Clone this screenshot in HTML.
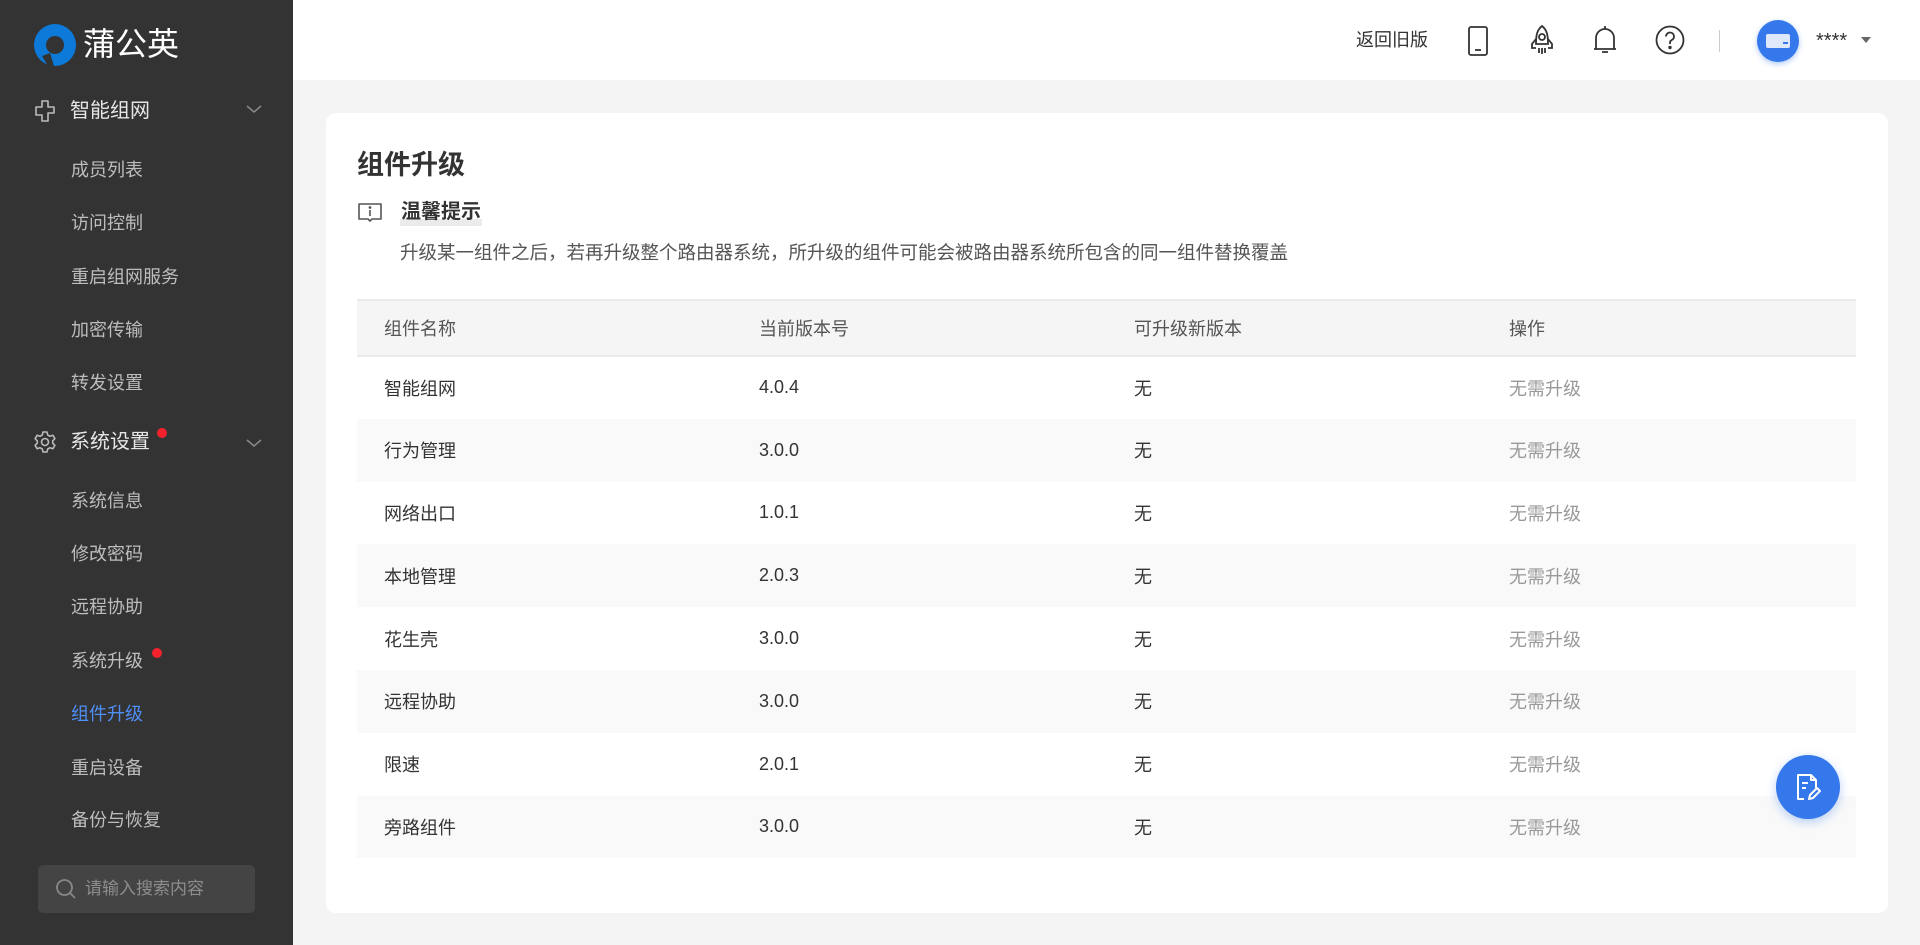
<!DOCTYPE html>
<html><head><meta charset="utf-8">
<style>
*{margin:0;padding:0;box-sizing:border-box}
body{width:1920px;height:945px;overflow:hidden;background:#f4f4f4;font-family:"Liberation Sans","Noto Sans CJK SC",sans-serif;position:relative}
.side{position:absolute;left:0;top:0;width:293px;height:945px;background:#333}
.abs{position:absolute}
.logo{left:34px;top:24px}
.logotxt{left:83px;top:22px;color:#fff;font-size:32px;line-height:44px}
.grp{color:#e6e6e6;font-size:20px;line-height:24px;left:70px}
.sub{color:#bdbdbd;font-size:18px;line-height:24px;left:71px}
.chev{left:246px}
.dot{width:10px;height:10px;border-radius:50%;background:#f5222d}
.search{left:38px;top:865px;width:217px;height:48px;background:#444;border-radius:5px}
.search span{position:absolute;left:47px;top:12px;color:#8d8d8d;font-size:17px;line-height:24px}
.header{position:absolute;left:293px;top:0;right:0;height:80px;background:#fff}
.card{position:absolute;left:326px;top:113px;width:1562px;height:800px;background:#fff;border-radius:10px}
.title{left:31px;top:34px;font-size:27px;font-weight:bold;color:#333;line-height:36px}
.tip{left:74px;top:85px;font-size:20px;font-weight:bold;color:#333;line-height:28px;background:linear-gradient(to bottom,transparent 75%,#ebebeb 75%);padding:0 1px}
.desc{left:74px;top:127px;font-size:18.5px;color:#555;line-height:26px;white-space:nowrap}
table{position:absolute;left:31px;top:186px;width:1499px;border-collapse:collapse;font-size:18px}
th{height:56px;background:#f5f5f5;color:#555;font-weight:normal;text-align:left;border-top:2px solid #eaeaea;border-bottom:2px solid #eaeaea}
td{height:62.8px;color:#333}
tr:nth-child(odd) td{background:#f9f9f9}
th,td{padding-left:27px}
td.g{color:#999}
.fab{left:1776px;top:755px;width:64px;height:64px;border-radius:50%;background:#3478eb;box-shadow:0 3px 10px rgba(52,120,235,.35)}
</style></head><body>
<div class="side">
  <svg class="abs logo" width="42" height="42" viewBox="0 0 42 42"><circle cx="21" cy="21" r="21" fill="#0d7ad9"/><circle cx="21" cy="21" r="9" fill="#333"/><path d="M8 32 L14 42 L20 42 L16 29 Z" fill="#333"/></svg>
  <div class="abs logotxt">蒲公英</div>
  <svg class="abs" style="left:33px;top:99px" width="24" height="25" viewBox="0 0 24 25" fill="none" stroke="#bbb" stroke-width="1.6"><path d="M9 2h6v6h6v6h-6v8h-6v-6H3V8h6z" stroke-linejoin="round"/></svg>
  <div class="abs grp" style="top:99px">智能组网</div>
  <svg class="abs chev" style="top:104px" width="16" height="10" viewBox="0 0 16 10" fill="none" stroke="#888" stroke-width="1.6"><path d="M1 2l7 6 7-6"/></svg>
  <div class="abs sub" style="top:158px">成员列表</div>
  <div class="abs sub" style="top:211px">访问控制</div>
  <div class="abs sub" style="top:265px">重启组网服务</div>
  <div class="abs sub" style="top:318px">加密传输</div>
  <div class="abs sub" style="top:371px">转发设置</div>
  <svg class="abs" style="left:33px;top:430px" width="24" height="24" viewBox="0 0 24 24" fill="none" stroke="#bbb" stroke-width="1.6"><path d="M10 2h4l.7 3 2.3 1.3 2.9-1 2 3.4-2.2 2.1v2.4l2.2 2.1-2 3.4-2.9-1L14.7 19 14 22h-4l-.7-3L7 17.7l-2.9 1-2-3.4 2.2-2.1v-2.4L2.1 8.7l2-3.4 2.9 1L9.3 5z" stroke-linejoin="round"/><circle cx="12" cy="12" r="3.5"/></svg>
  <div class="abs grp" style="top:430px">系统设置</div>
  <div class="abs dot" style="left:157px;top:428px"></div>
  <svg class="abs chev" style="top:438px" width="16" height="10" viewBox="0 0 16 10" fill="none" stroke="#888" stroke-width="1.6"><path d="M1 2l7 6 7-6"/></svg>
  <div class="abs sub" style="top:489px">系统信息</div>
  <div class="abs sub" style="top:542px">修改密码</div>
  <div class="abs sub" style="top:595px">远程协助</div>
  <div class="abs sub" style="top:649px">系统升级</div>
  <div class="abs dot" style="left:152px;top:648px"></div>
  <div class="abs sub" style="top:702px;color:#4f8ff7">组件升级</div>
  <div class="abs sub" style="top:756px">重启设备</div>
  <div class="abs sub" style="top:808px">备份与恢复</div>
  <div class="abs search"><svg class="abs" style="left:16px;top:12px" width="24" height="24" viewBox="0 0 24 24" fill="none" stroke="#888" stroke-width="1.8"><circle cx="10.5" cy="10.5" r="7.5"/><path d="M16 16l5 5"/></svg><span>请输入搜索内容</span></div>
</div>
<div class="header">
  <div class="abs" style="left:1063px;top:27px;font-size:18px;color:#333;line-height:26px">返回旧版</div>
  <svg class="abs" style="left:1172px;top:25px" width="26" height="32" viewBox="0 0 26 32" fill="none" stroke="#333" stroke-width="1.8"><rect x="4" y="2" width="18" height="28" rx="2"/><path d="M10 25h6"/></svg>
  <svg class="abs" style="left:1235px;top:24px" width="28" height="34" viewBox="0 0 28 34" fill="none" stroke="#333" stroke-width="1.8"><path d="M14 2c5 4 6 9 6 18H8C8 11 9 6 14 2z"/><circle cx="14" cy="13" r="3"/><path d="M8 15l-4 5v4h4M20 15l4 5v4h-4M11 24v5M14 24v6M17 24v5"/></svg>
  <svg class="abs" style="left:1298px;top:23px" width="28" height="34" viewBox="0 0 28 34" fill="none" stroke="#333" stroke-width="1.8"><path d="M5 26V15a9 9 0 0 1 18 0v11H3h22"/><path d="M14 3v3M11 29h6"/></svg>
  <svg class="abs" style="left:1361px;top:24px" width="32" height="32" viewBox="0 0 32 32" fill="none" stroke="#333" stroke-width="1.8"><circle cx="16" cy="16" r="13.5"/><path d="M12 12.5a4 4 0 1 1 5.5 3.7c-1 .5-1.5 1.2-1.5 2.3v1.5"/><circle cx="16" cy="23.5" r=".8" fill="#333"/></svg>
  <div class="abs" style="left:1426px;top:30px;width:1px;height:22px;background:#ccc"></div>
  <div class="abs" style="left:1464px;top:20px;width:42px;height:42px;border-radius:50%;background:#3478eb;box-shadow:0 2px 6px rgba(52,120,235,.4)"><div class="abs" style="left:9px;top:14px;width:24px;height:14px;background:#dfe8fb;border-radius:2px"></div><div class="abs" style="left:26px;top:22px;width:5px;height:2px;background:#3478eb"></div></div>
  <div class="abs" style="left:1523px;top:29px;font-size:20px;color:#333;line-height:24px">****</div>
  <div class="abs" style="left:1568px;top:37px;width:0;height:0;border-left:5px solid transparent;border-right:5px solid transparent;border-top:6px solid #666"></div>
</div>
<div class="card">
  <div class="abs title">组件升级</div>
  <svg class="abs" style="left:31px;top:88px" width="26" height="24" viewBox="0 0 26 24" fill="none" stroke="#555" stroke-width="1.6"><path d="M2 3h22v15H15l-2 2-2-2H2z" stroke-linejoin="round"/><path d="M13 9v6"/><circle cx="13" cy="6.5" r=".6" fill="#555"/></svg>
  <div class="abs tip">温馨提示</div>
  <div class="abs desc">升级某一组件之后，若再升级整个路由器系统，所升级的组件可能会被路由器系统所包含的同一组件替换覆盖</div>
  <table>
    <tr><th style="width:375px">组件名称</th><th style="width:375px">当前版本号</th><th style="width:375px">可升级新版本</th><th>操作</th></tr>
    <tr><td>智能组网</td><td>4.0.4</td><td>无</td><td class="g">无需升级</td></tr>
    <tr><td>行为管理</td><td>3.0.0</td><td>无</td><td class="g">无需升级</td></tr>
    <tr><td>网络出口</td><td>1.0.1</td><td>无</td><td class="g">无需升级</td></tr>
    <tr><td>本地管理</td><td>2.0.3</td><td>无</td><td class="g">无需升级</td></tr>
    <tr><td>花生壳</td><td>3.0.0</td><td>无</td><td class="g">无需升级</td></tr>
    <tr><td>远程协助</td><td>3.0.0</td><td>无</td><td class="g">无需升级</td></tr>
    <tr><td>限速</td><td>2.0.1</td><td>无</td><td class="g">无需升级</td></tr>
    <tr><td>旁路组件</td><td>3.0.0</td><td>无</td><td class="g">无需升级</td></tr>
  </table>
</div>
<div class="abs fab"><svg class="abs" style="left:18px;top:17px" width="30" height="30" viewBox="0 0 30 30" fill="none" stroke="#fff" stroke-width="2" stroke-linejoin="round"><path d="M10 27H4V3h13l5 5v8"/><path d="M17 3v5h5"/><path d="M8 11h6M8 16h4"/><path d="M15 27l1-4 7-7 3 3-7 7z"/></svg></div>
</body></html>
